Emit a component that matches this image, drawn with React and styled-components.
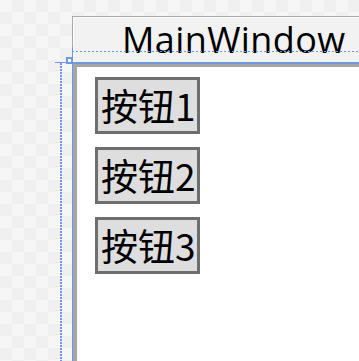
import React from "react";
import styled, { createGlobalStyle } from "styled-components";

const Global = createGlobalStyle`
  html, body { margin: 0; padding: 0; }
  body {
    width: 359px;
    height: 361px;
    overflow: hidden;
    background: repeating-conic-gradient(#f0f0f0 0 25%, #f6f6f6 0 50%) 0 0 / 24px 24px;
  }
`;

const Canvas = styled.div`
  position: relative;
  width: 359px;
  height: 361px;
  overflow: hidden;
  box-sizing: border-box;
  padding: 16px 0 0 72px;
  display: flex;
`;

const Window = styled.div`
  flex: 1;
  display: flex;
  flex-direction: column;
  min-width: 0;
`;

const TitleBar = styled.div`
  height: 46px;
  box-sizing: border-box;
  border-top: 1px solid #a9a9a9;
  border-left: 1px solid #a9a9a9;
  box-shadow: inset 1px 1px 0 #fdfdfd;
  background: #f2f2f2;
  padding-left: 49px;
  display: flex;
  align-items: flex-start;
  white-space: nowrap;
`;

const Title = styled.span`
  font-family: "Open Sans", "Noto Sans", sans-serif;
  font-size: 36px;
  letter-spacing: 0.4px;
  line-height: 38px;
  margin-top: 4px;
  color: #000;
`;

const Frame = styled.div`
  flex: 1;
  border-top: 5px solid #a6a6a6;
  border-left: 5px solid #a6a6a6;
  background: #ffffff;
  padding: 10px 0 0 18px;
  display: flex;
  flex-direction: column;
  align-items: flex-start;
  gap: 13px;
`;

const PushButton = styled.button`
  width: 105px;
  height: 57px;
  box-sizing: border-box;
  margin: 0;
  border: 3px solid #6e6e6e;
  background: #dedede;
  padding: 0 0 0 3px;
  display: flex;
  align-items: center;
  font-family: "Noto Sans CJK SC", "Noto Sans", sans-serif;
  font-size: 37px;
  line-height: 1;
  color: #000;
  white-space: nowrap;
  overflow: hidden;
`;

const Guide = styled.div`
  position: absolute;
  left: ${(p) => p.$x}px;
  top: ${(p) => p.$y}px;
  width: ${(p) => p.$w}px;
  height: ${(p) => p.$h}px;
  background: ${(p) =>
    p.$dotted
      ? p.$vertical
        ? "repeating-linear-gradient(to bottom, #6f98e4 0 2px, transparent 2px 3px)"
        : "repeating-linear-gradient(to right, #6f98e4 0 2px, transparent 2px 4px)"
      : "#6f98de"};
`;

const Handle = styled.div`
  position: absolute;
  left: 66px;
  top: 57px;
  width: 7px;
  height: 7px;
  box-sizing: border-box;
  border: 2px solid #6f98de;
  background: #ffffff;
`;

export default function App() {
  return (
    <>
      <Global />
      <Canvas>
        <Window>
          <TitleBar>
            <Title>MainWindow</Title>
          </TitleBar>
          <Frame>
            <PushButton>按钮1</PushButton>
            <PushButton>按钮2</PushButton>
            <PushButton>按钮3</PushButton>
          </Frame>
        </Window>
        <Guide $dotted $x={72} $y={51} $w={287} $h={1} />
        <Guide $x={72} $y={62} $w={287} $h={2} />
        <Guide $x={55} $y={62} $w={12} $h={1} />
        <Guide $x={72} $y={47} $w={1} $h={11} />
        <Guide $x={72} $y={64} $w={1} $h={297} />
        <Guide $dotted $vertical $x={60} $y={63} $w={2} $h={298} />
        <Handle />
      </Canvas>
    </>
  );
}
